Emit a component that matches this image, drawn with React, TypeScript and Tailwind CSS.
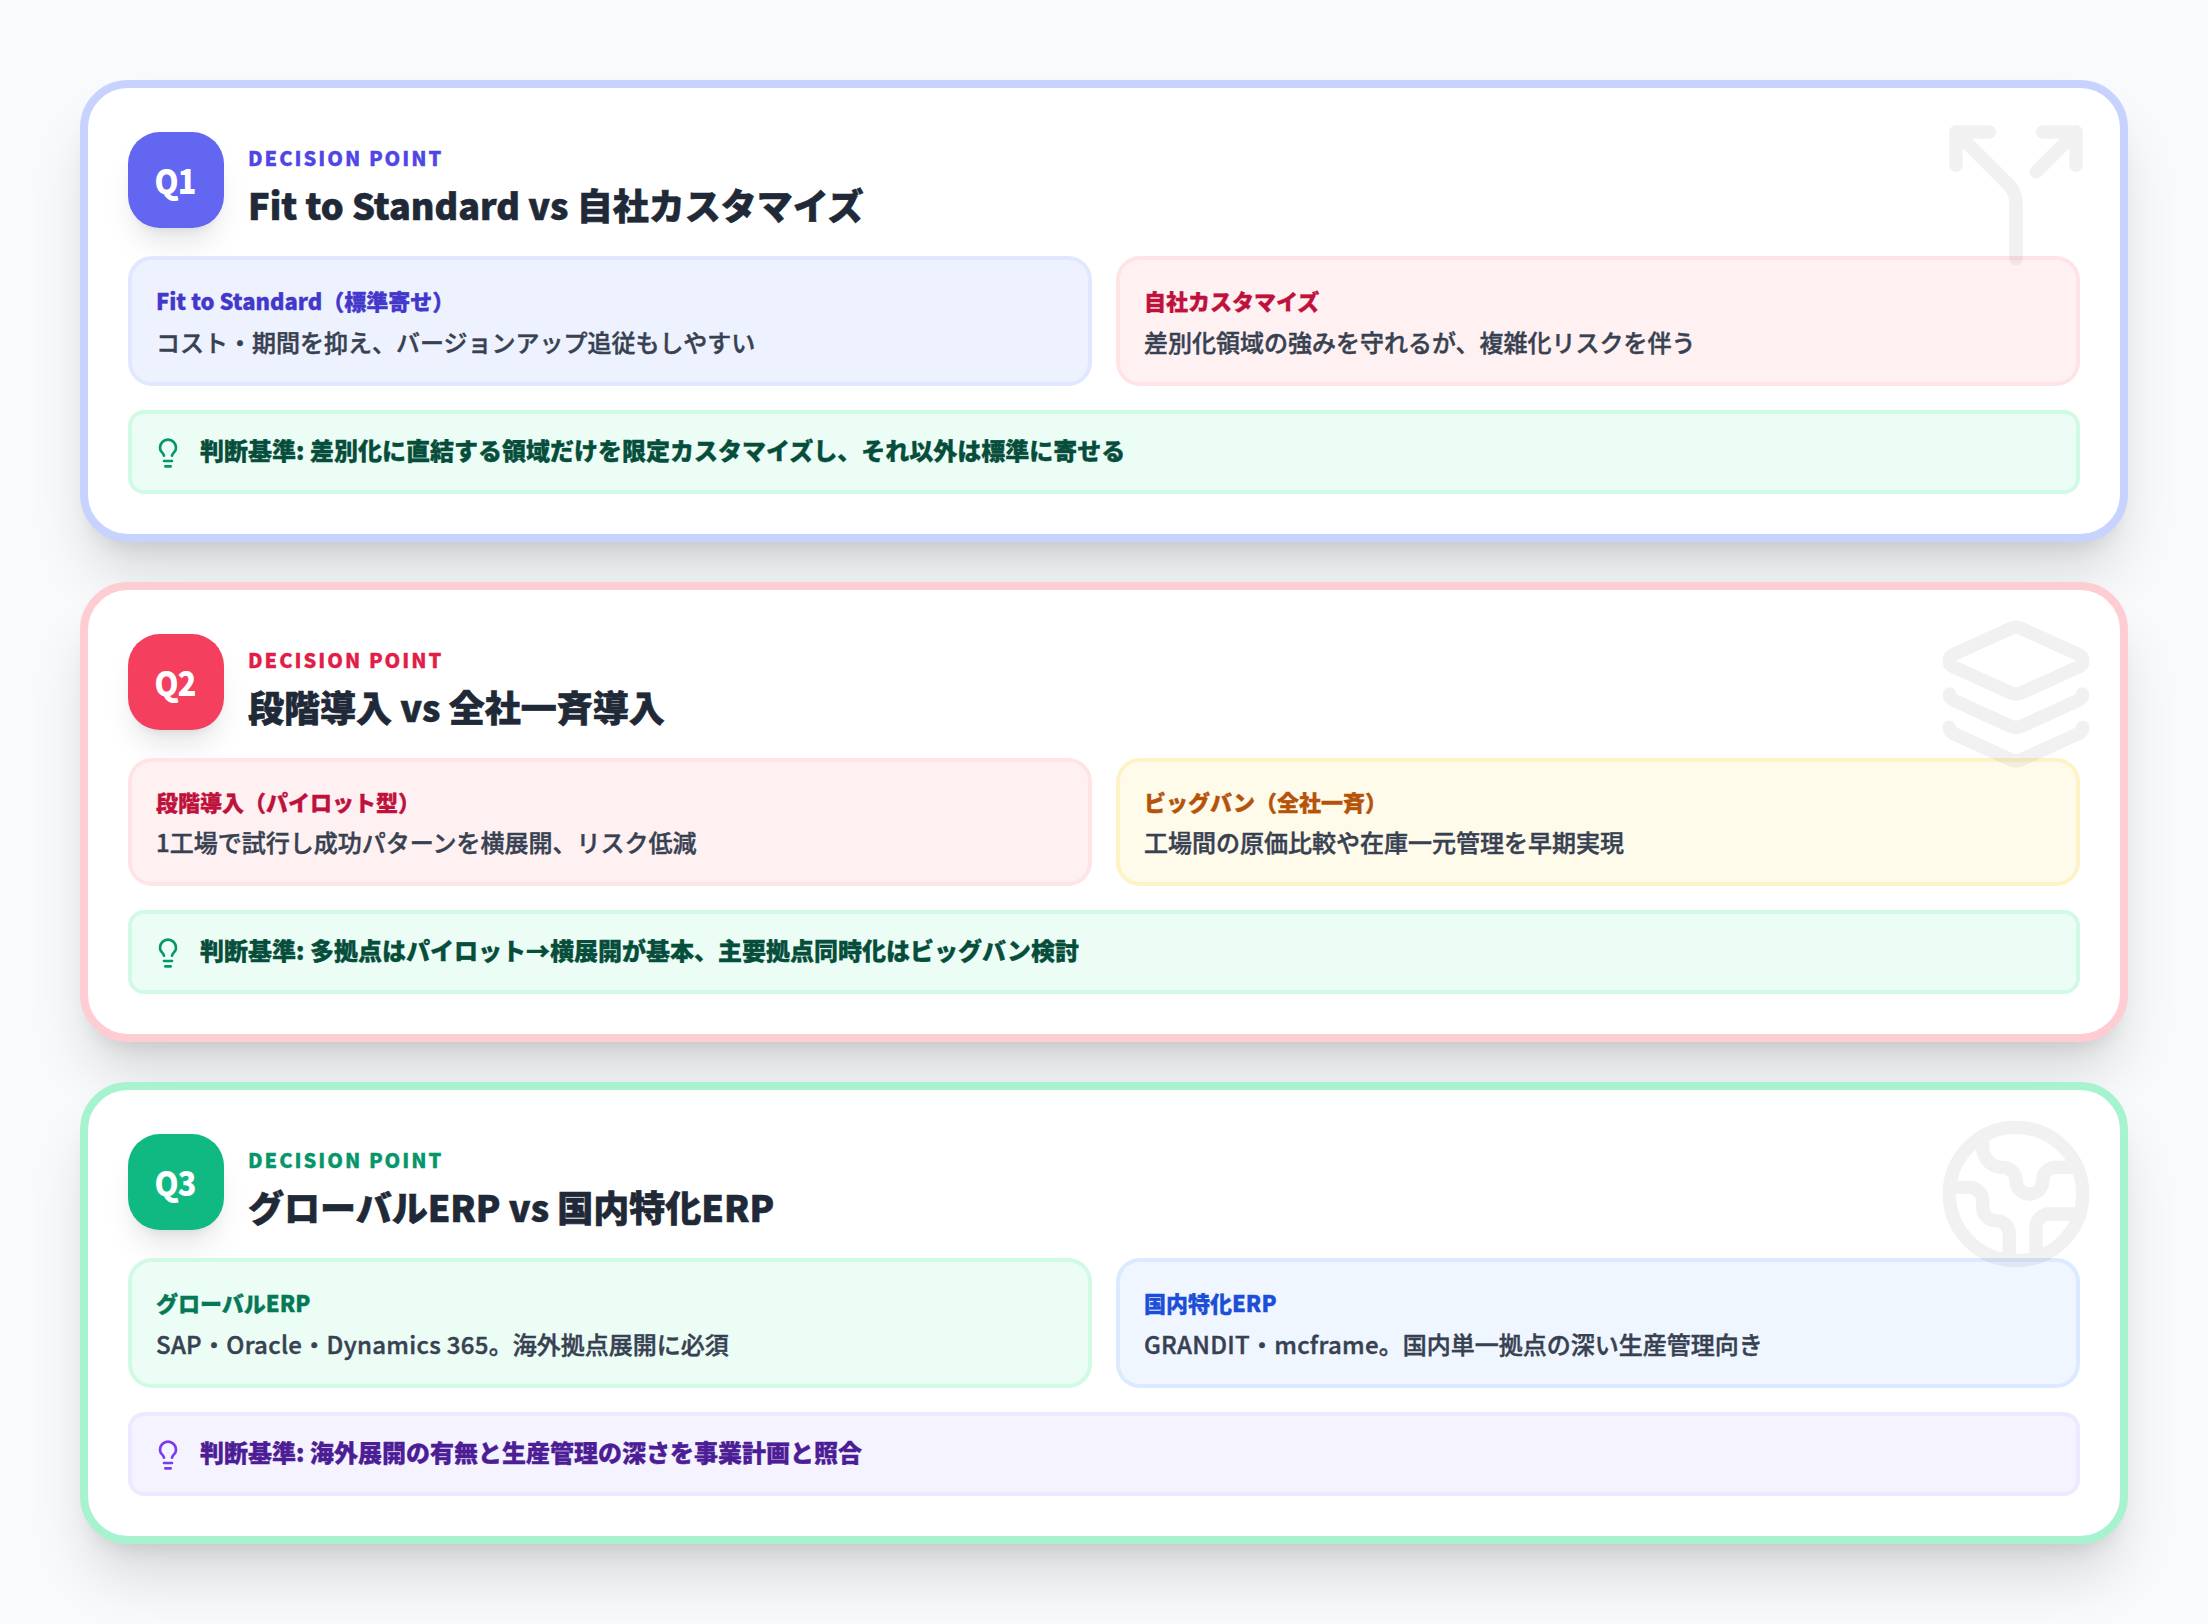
import { Earth, Layers, Lightbulb, Split } from 'lucide-react'
import type { LucideIcon } from 'lucide-react'

type Option = {
  label: string
  latin?: string
  body: string
  box: string
  labelColor: string
}

type Decision = {
  q: string
  title: string
  border: string
  badge: string
  accent: string
  Icon: LucideIcon
  options: [Option, Option]
  labelLeading: string
  note: string
  noteBox: string
  noteText: string
  noteIcon: string
}

const INDIGO = 'bg-[#eef2ff] border-[#e0e7ff]'
const ROSE = 'bg-[#fff1f2] border-[#ffe4e6]'
const AMBER = 'bg-[#fffbeb] border-[#fef3c7]'
const EMERALD = 'bg-[#ecfdf5] border-[#d1fae5]'
const BLUE = 'bg-[#eff6ff] border-[#dbeafe]'

const DECISIONS: Decision[] = [
  {
    q: 'Q1',
    title: 'Fit to Standard vs 自社カスタマイズ',
    border: 'border-[#c7d2fe]',
    badge: 'bg-[#6366f1]',
    accent: 'text-[#4f46e5]',
    Icon: Split,
    options: [
      {
        label: 'Fit to Standard（標準寄せ）',
        body: 'コスト・期間を抑え、バージョンアップ追従もしやすい',
        box: INDIGO,
        labelColor: 'text-[#4338ca]',
      },
      {
        label: '自社カスタマイズ',
        body: '差別化領域の強みを守れるが、複雑化リスクを伴う',
        box: ROSE,
        labelColor: 'text-[#be123c]',
      },
    ],
    labelLeading: 'leading-[40px]',
    note: '判断基準: 差別化に直結する領域だけを限定カスタマイズし、それ以外は標準に寄せる',
    noteBox: EMERALD,
    noteText: 'text-[#064e3b]',
    noteIcon: 'text-[#059669]',
  },
  {
    q: 'Q2',
    title: '段階導入 vs 全社一斉導入',
    border: 'border-[#fecdd3]',
    badge: 'bg-[#f43f5e]',
    accent: 'text-[#e11d48]',
    Icon: Layers,
    options: [
      {
        label: '段階導入（パイロット型）',
        body: '1工場で試行し成功パターンを横展開、リスク低減',
        box: ROSE,
        labelColor: 'text-[#be123c]',
      },
      {
        label: 'ビッグバン（全社一斉）',
        body: '工場間の原価比較や在庫一元管理を早期実現',
        box: AMBER,
        labelColor: 'text-[#b45309]',
      },
    ],
    labelLeading: 'leading-[38px]',
    note: '判断基準: 多拠点はパイロット→横展開が基本、主要拠点同時化はビッグバン検討',
    noteBox: EMERALD,
    noteText: 'text-[#064e3b]',
    noteIcon: 'text-[#059669]',
  },
  {
    q: 'Q3',
    title: 'グローバルERP vs 国内特化ERP',
    border: 'border-[#a7f3d0]',
    badge: 'bg-[#10b981]',
    accent: 'text-[#059669]',
    Icon: Earth,
    options: [
      {
        label: 'グローバルERP',
        latin: 'SAP・Oracle・Dynamics 365',
        body: '。海外拠点展開に必須',
        box: EMERALD,
        labelColor: 'text-[#047857]',
      },
      {
        label: '国内特化ERP',
        latin: 'GRANDIT・mcframe',
        body: '。国内単一拠点の深い生産管理向き',
        box: BLUE,
        labelColor: 'text-[#1d4ed8]',
      },
    ],
    labelLeading: 'leading-[40px]',
    note: '判断基準: 海外展開の有無と生産管理の深さを事業計画と照合',
    noteBox: 'bg-[#f5f3ff] border-[#ede9fe]',
    noteText: 'text-[#4c1d95]',
    noteIcon: 'text-[#7c3aed]',
  },
]

function DecisionCard({ d }: { d: Decision }) {
  const Icon = d.Icon
  return (
    <section className={`relative rounded-[48px] border-8 bg-white px-10 pt-[44px] pb-10 shadow-[0_40px_60px_-10px_rgba(0,0,0,0.14),0_16px_20px_-12px_rgba(0,0,0,0.1)] ${d.border}`}>
      <div className="mb-7 flex items-start gap-6">
        <div className={`flex h-24 w-24 shrink-0 items-center justify-center rounded-[32px] text-white shadow-[0_20px_30px_-6px_rgba(0,0,0,0.1),0_8px_12px_-8px_rgba(0,0,0,0.1)] ${d.badge}`}>
          <span className="scale-x-[0.9] pr-[3px] pb-[2px] text-[34px] font-black tracking-[-0.025em]">{d.q}</span>
        </div>
        <div className="pt-[10px]">
          <div className={`text-[20px] leading-[32px] font-black tracking-[0.1em] [-webkit-text-stroke:0.3px] ${d.accent}`}>DECISION POINT</div>
          <h2 className="mt-[7px] text-[36px] leading-[47px] font-black text-[#1f2937] [-webkit-text-stroke:0.6px]">{d.title}</h2>
        </div>
      </div>

      <div className="mb-6 grid grid-cols-2 gap-6">
        {d.options.map((o) => (
          <div key={o.label} className={`rounded-3xl border-4 px-6 pt-5 pb-[22px] ${o.box}`}>
            <div className={`text-[22px] font-black [-webkit-text-stroke:0.35px] ${d.labelLeading} ${o.labelColor}`}>{o.label}</div>
            <div className="mt-1 text-[24px] leading-[36px] font-medium text-[#374151] [-webkit-text-stroke:0.45px]">
              <span className="tracking-[0.3px]">{o.latin}</span>
              {o.body}
            </div>
          </div>
        ))}
      </div>

      <div className={`flex items-center gap-4 rounded-2xl border-4 px-5 py-4 ${d.noteBox}`}>
        <Lightbulb className={`mt-[2px] h-8 w-8 shrink-0 ${d.noteIcon}`} />
        <p className={`mb-1 text-[24px] leading-[40px] font-black [-webkit-text-stroke:0.35px] ${d.noteText}`}>{d.note}</p>
      </div>

      <Icon className="absolute top-6 right-6 h-40 w-40 text-black opacity-5" />
    </section>
  )
}

export default function App() {
  return (
    <div className="flex min-h-screen flex-col gap-10 bg-[#f8fafc] p-20 font-['Noto_Sans_CJK_JP','Noto_Sans',sans-serif]">
      {DECISIONS.map((d) => (
        <DecisionCard key={d.q} d={d} />
      ))}
    </div>
  )
}
